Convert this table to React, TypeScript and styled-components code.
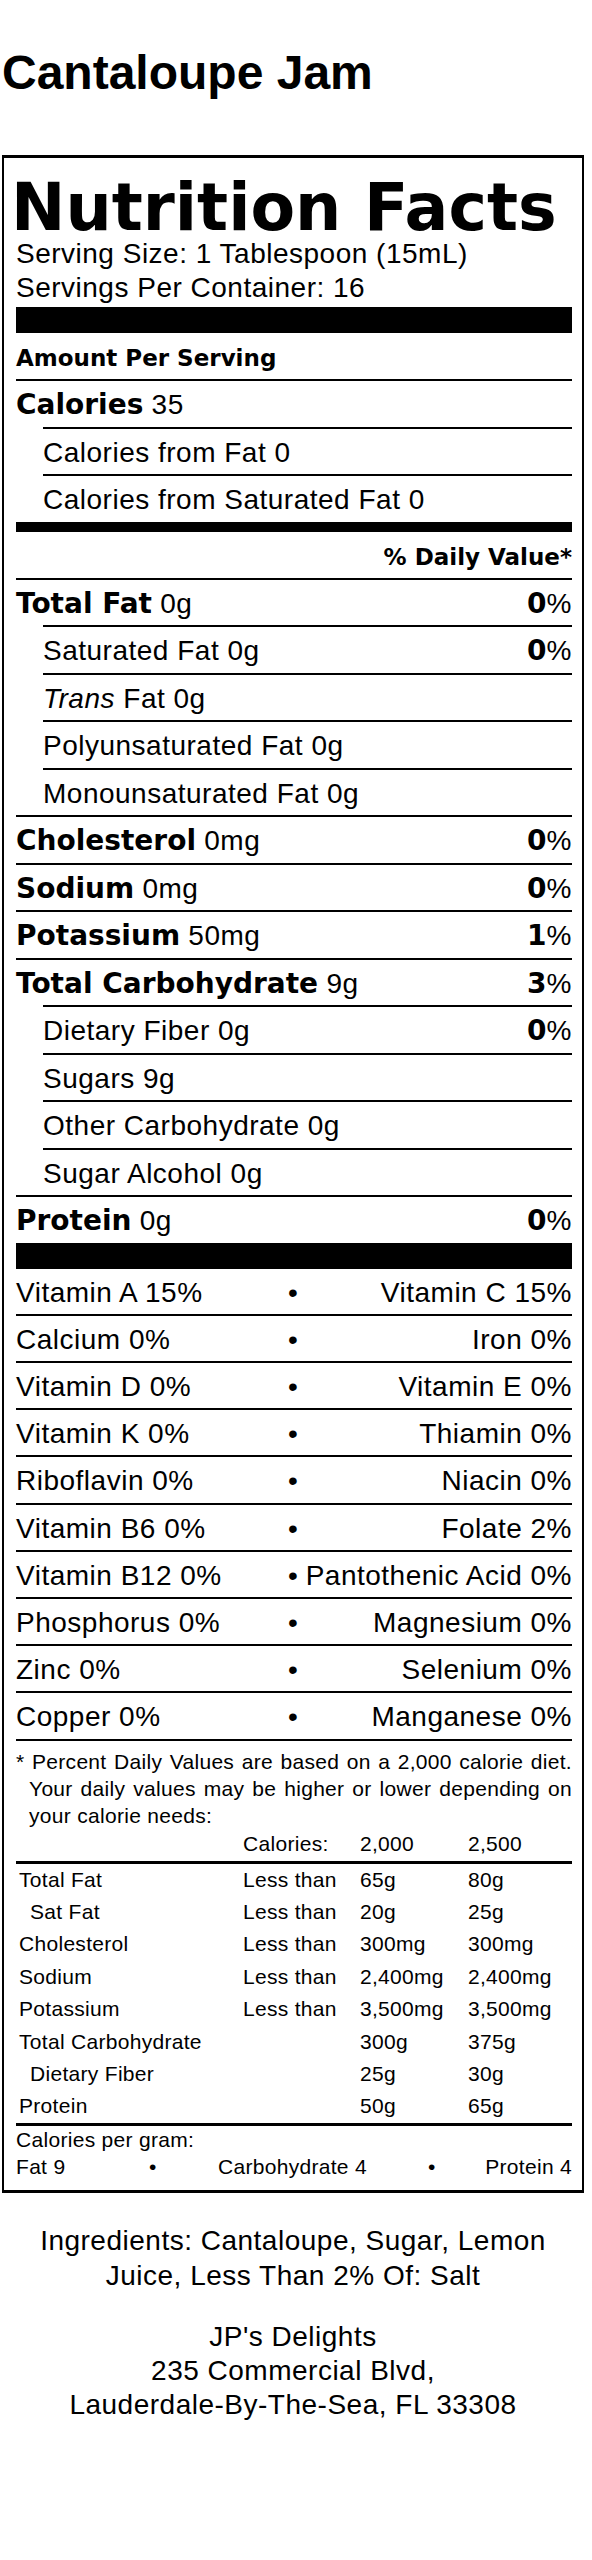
import React from "react";
import styled, { createGlobalStyle } from "styled-components";

const GlobalStyle = createGlobalStyle`
  html, body {
    margin: 0;
    padding: 0;
    background: #fff;
  }
  body {
    font-family: "Liberation Sans", Arial, sans-serif;
    color: #000;
  }
`;

const heavy = `"DejaVu Sans", "Liberation Sans", sans-serif`;

const Page = styled.div`
  width: 582px;
  padding: 45px 0 0 2px;
`;

const Title = styled.h1`
  margin: 0 0 54px;
  font-size: 48px;
  font-weight: 700;
  line-height: 56px;
`;

const Label = styled.section`
  box-sizing: border-box;
  width: 582px;
  border: solid #000;
  border-width: 3px 2px;
  padding: 21px 10px 10px 12px;
  font-size: 28px;
  letter-spacing: 0.5px;
`;

const Heading = styled.h2`
  margin: 0 0 0 -5px;
  font-family: ${heavy};
  font-weight: 700;
  font-size: 65px;
  line-height: 58px;
  letter-spacing: 0;
`;

const Serving = styled.div`
  line-height: 34px;
`;

const Bar = styled.div<{ $h: number; $gap?: number }>`
  height: ${p => p.$h}px;
  margin-top: ${p => p.$gap || 0}px;
  background: #000;
`;

const SmallRow = styled.div<{ $right?: boolean }>`
  display: flex;
  justify-content: ${p => (p.$right ? "flex-end" : "flex-start")};
  padding-top: 4px;
  line-height: 42px;
  font-family: ${heavy};
  font-weight: 700;
  font-size: 23px;
  letter-spacing: 0;
`;

const Row = styled.div<{ $indent?: boolean; $line?: boolean }>`
  display: flex;
  justify-content: space-between;
  align-items: baseline;
  margin-left: ${p => (p.$indent ? "27px" : "0")};
  padding-top: 2px;
  line-height: 43.5px;
  border-top: ${p => (p.$line ? "2px solid #000" : "none")};
`;

const Strong = styled.b`
  font-family: ${heavy};
  font-weight: 700;
  letter-spacing: 0;
`;

const VitRow = styled.div`
  display: grid;
  grid-template-columns: 1fr 1fr;
  padding-top: 2px;
  line-height: 43.2px;
  border-bottom: 2px solid #000;
`;

const VitRight = styled.div`
  display: flex;
  justify-content: space-between;
`;

const Dot = styled.span`
  margin-left: -6px;
`;

const Footnote = styled.p`
  margin: 7px 0 0;
  padding-left: 13px;
  text-indent: -13px;
  font-size: 21px;
  letter-spacing: 0.3px;
  line-height: 27px;
  text-align: justify;
`;

const Table = styled.div`
  font-size: 21px;
  letter-spacing: 0.3px;
  border-bottom: 3px solid #000;
`;

const TableRow = styled.div<{ $head?: boolean; $indent?: boolean }>`
  display: grid;
  grid-template-columns: 227px 117px 108px 1fr;
  line-height: ${p => (p.$head ? "30px" : "32.4px")};
  padding-bottom: ${p => (p.$head ? "2px" : "0")};
  border-bottom: ${p => (p.$head ? "3px solid #000" : "none")};
  & > span:first-child {
    padding-left: ${p => (p.$indent ? "14px" : "3px")};
  }
`;

const PerGram = styled.div`
  font-size: 21px;
  letter-spacing: 0.3px;
  line-height: 27px;
`;

const PerGramLine = styled.div`
  display: grid;
  grid-template-columns: 133px 69px 210px auto 1fr;
  & > span:last-child {
    justify-self: end;
  }
`;

const Info = styled.p<{ $gap: number; $lh: number }>`
  margin: ${p => p.$gap}px 0 0;
  text-align: center;
  font-size: 28px;
  letter-spacing: 0.5px;
  line-height: ${p => p.$lh}px;
`;

type Nutrient = {
  name: string;
  amount: string;
  bold?: boolean;
  indent?: boolean;
  italic?: boolean;
  dv?: string;
};

const nutrients: Nutrient[] = [
  { name: "Total Fat", amount: "0g", bold: true, dv: "0" },
  { name: "Saturated Fat", amount: "0g", indent: true, dv: "0" },
  { name: "Trans", amount: "Fat 0g", indent: true, italic: true },
  { name: "Polyunsaturated Fat", amount: "0g", indent: true },
  { name: "Monounsaturated Fat", amount: "0g", indent: true },
  { name: "Cholesterol", amount: "0mg", bold: true, dv: "0" },
  { name: "Sodium", amount: "0mg", bold: true, dv: "0" },
  { name: "Potassium", amount: "50mg", bold: true, dv: "1" },
  { name: "Total Carbohydrate", amount: "9g", bold: true, dv: "3" },
  { name: "Dietary Fiber", amount: "0g", indent: true, dv: "0" },
  { name: "Sugars", amount: "9g", indent: true },
  { name: "Other Carbohydrate", amount: "0g", indent: true },
  { name: "Sugar Alcohol", amount: "0g", indent: true },
  { name: "Protein", amount: "0g", bold: true, dv: "0" },
];

const vitamins: [string, string][] = [
  ["Vitamin A 15%", "Vitamin C 15%"],
  ["Calcium 0%", "Iron 0%"],
  ["Vitamin D 0%", "Vitamin E 0%"],
  ["Vitamin K 0%", "Thiamin 0%"],
  ["Riboflavin 0%", "Niacin 0%"],
  ["Vitamin B6 0%", "Folate 2%"],
  ["Vitamin B12 0%", "Pantothenic Acid 0%"],
  ["Phosphorus 0%", "Magnesium 0%"],
  ["Zinc 0%", "Selenium 0%"],
  ["Copper 0%", "Manganese 0%"],
];

const limits: { name: string; less?: boolean; a: string; b: string; indent?: boolean }[] = [
  { name: "Total Fat", less: true, a: "65g", b: "80g" },
  { name: "Sat Fat", less: true, a: "20g", b: "25g", indent: true },
  { name: "Cholesterol", less: true, a: "300mg", b: "300mg" },
  { name: "Sodium", less: true, a: "2,400mg", b: "2,400mg" },
  { name: "Potassium", less: true, a: "3,500mg", b: "3,500mg" },
  { name: "Total Carbohydrate", a: "300g", b: "375g" },
  { name: "Dietary Fiber", a: "25g", b: "30g", indent: true },
  { name: "Protein", a: "50g", b: "65g" },
];

const NutrientRow: React.FC<{ item: Nutrient }> = ({ item }) => {
  let label: React.ReactNode = `${item.name} `;
  if (item.bold) label = <Strong>{item.name}</Strong>;
  if (item.italic) label = <i>{item.name}</i>;
  return (
    <Row $line $indent={item.indent}>
      <span>
        {label} {item.amount}
      </span>
      {item.dv && (
        <span>
          <Strong>{item.dv}</Strong>%
        </span>
      )}
    </Row>
  );
};

export default function App() {
  return (
    <Page>
      <GlobalStyle />
      <Title>Cantaloupe Jam</Title>
      <Label>
        <Heading>Nutrition Facts</Heading>
        <Serving>
          Serving Size: 1 Tablespoon (15mL)
          <br />
          Servings Per Container: 16
        </Serving>
        <Bar $h={26} $gap={2} />
        <SmallRow>Amount Per Serving</SmallRow>
        <Row $line>
          <span>
            <Strong>Calories</Strong> 35
          </span>
        </Row>
        <Row $line $indent>
          <span>Calories from Fat 0</span>
        </Row>
        <Row $line $indent>
          <span>Calories from Saturated Fat 0</span>
        </Row>
        <Bar $h={10} />
        <SmallRow $right>% Daily Value*</SmallRow>
        {nutrients.map(n => (
          <NutrientRow key={n.name} item={n} />
        ))}
        <Bar $h={26} />
        {vitamins.map(([left, right]) => (
          <VitRow key={left}>
            <span>{left}</span>
            <VitRight>
              <Dot>•</Dot>
              <span>{right}</span>
            </VitRight>
          </VitRow>
        ))}
        <Footnote>
          * Percent Daily Values are based on a 2,000 calorie diet. Your daily values may be
          higher or lower depending on your calorie needs:
        </Footnote>
        <Table>
          <TableRow $head>
            <span />
            <span>Calories:</span>
            <span>2,000</span>
            <span>2,500</span>
          </TableRow>
          {limits.map(l => (
            <TableRow key={l.name} $indent={l.indent}>
              <span>{l.name}</span>
              <span>{l.less ? "Less than" : ""}</span>
              <span>{l.a}</span>
              <span>{l.b}</span>
            </TableRow>
          ))}
        </Table>
        <PerGram>
          Calories per gram:
          <PerGramLine>
            <span>Fat 9</span>
            <span>•</span>
            <span>Carbohydrate 4</span>
            <span>•</span>
            <span>Protein 4</span>
          </PerGramLine>
        </PerGram>
      </Label>
      <Info $gap={30} $lh={35}>
        Ingredients: Cantaloupe, Sugar, Lemon
        <br />
        Juice, Less Than 2% Of: Salt
      </Info>
      <Info $gap={27} $lh={34}>
        JP's Delights
        <br />
        235 Commercial Blvd,
        <br />
        Lauderdale-By-The-Sea, FL 33308
      </Info>
    </Page>
  );
}
